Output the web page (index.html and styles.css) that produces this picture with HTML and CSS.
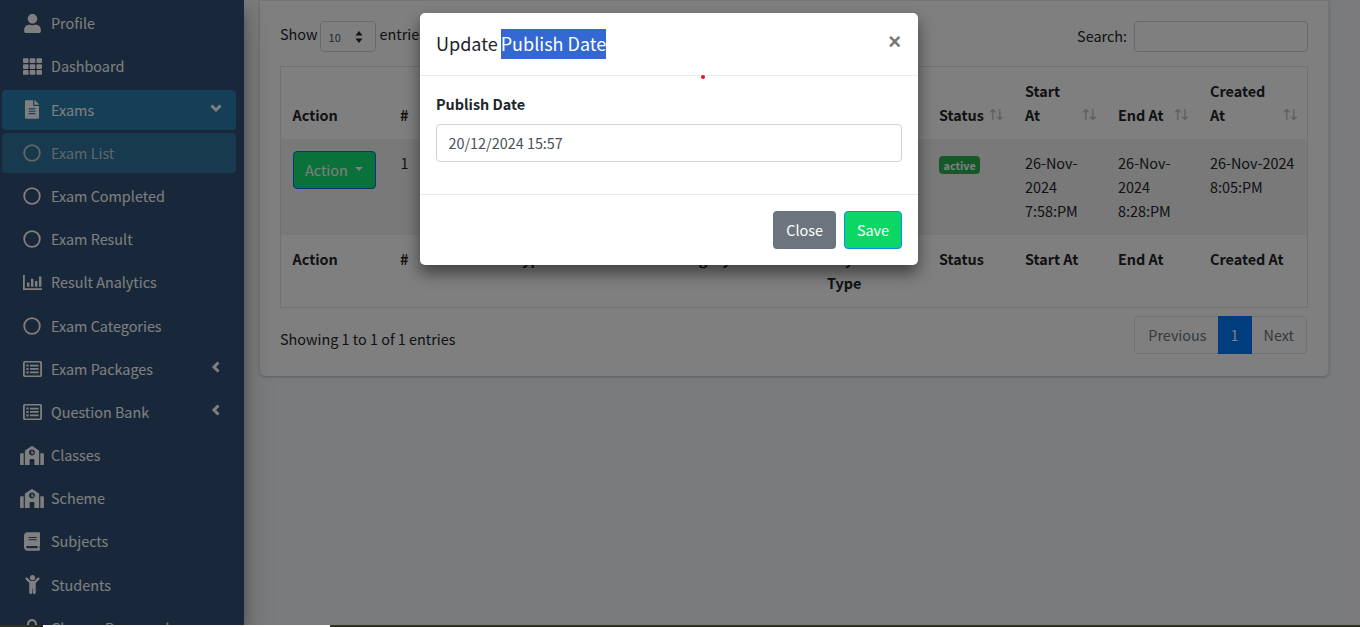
FILE: index.html
```html
<!DOCTYPE html>
<html lang="en">
<head>
<meta charset="utf-8">
<title>Exam List</title>
<link rel="stylesheet" href="styles.css">
</head>
<body>
<div class="shell">
  <aside class="sidebar">
    <nav class="nav">
      <a class="nav-link"><span class="nav-icon"><svg class="i-user" viewBox="0 0 448 512"><path d="M224 256c70.7 0 128-57.3 128-128S294.7 0 224 0 96 57.3 96 128s57.3 128 128 128zm89.6 32h-16.7c-22.2 10.2-46.9 16-72.9 16s-50.6-5.800-72.900-16h-16.700C60.200 288 0 348.200 0 422.400V464c0 26.500 21.500 48 48 48h352c26.500 0 48-21.500 48-48v-41.600c0-74.200-60.200-134.400-134.400-134.400z"/></svg></span><span>Profile</span></a>
      <a class="nav-link"><span class="nav-icon"><svg class="i-th" viewBox="0 0 512 512"><path d="M149.333 56v80c0 13.255-10.745 24-24 24H24c-13.255 0-24-10.745-24-24V56c0-13.255 10.745-24 24-24h101.333c13.255 0 24 10.745 24 24zm181.334 240v-80c0-13.255-10.745-24-24-24H205.333c-13.255 0-24 10.745-24 24v80c0 13.255 10.745 24 24 24h101.333c13.256 0 24.001-10.745 24.001-24zm32-240v80c0 13.255 10.745 24 24 24H488c13.255 0 24-10.745 24-24V56c0-13.255-10.745-24-24-24H386.667c-13.255 0-24 10.745-24 24zm-32 80V56c0-13.255-10.745-24-24-24H205.333c-13.255 0-24 10.745-24 24v80c0 13.255 10.745 24 24 24h101.333c13.256 0 24.001-10.745 24.001-24zm-205.334 56H24c-13.255 0-24 10.745-24 24v80c0 13.255 10.745 24 24 24h101.333c13.255 0 24-10.745 24-24v-80c0-13.255-10.745-24-24-24zM0 376v80c0 13.255 10.745 24 24 24h101.333c13.255 0 24-10.745 24-24v-80c0-13.255-10.745-24-24-24H24c-13.255 0-24 10.745-24 24zm386.667-56H488c13.255 0 24-10.745 24-24v-80c0-13.255-10.745-24-24-24H386.667c-13.255 0-24 10.745-24 24v80c0 13.255 10.745 24 24 24zm0 160H488c13.255 0 24-10.745 24-24v-80c0-13.255-10.745-24-24-24H386.667c-13.255 0-24 10.745-24 24v80c0 13.255 10.745 24 24 24zM181.333 376v80c0 13.255 10.745 24 24 24h101.333c13.255 0 24-10.745 24-24v-80c0-13.255-10.745-24-24-24H205.333c-13.255 0-24 10.745-24 24z"/></svg></span><span>Dashboard</span></a>
      <a class="nav-link is-open"><span class="nav-icon"><svg class="i-file" viewBox="0 0 384 512"><path d="M224 136V0H24C10.700 0 0 10.700 0 24v464c0 13.300 10.700 24 24 24h336c13.300 0 24-10.700 24-24V160H248c-13.200 0-24-10.800-24-24zm64 236c0 6.600-5.400 12-12 12H108c-6.600 0-12-5.400-12-12v-8c0-6.600 5.400-12 12-12h168c6.600 0 12 5.400 12 12v8zm0-64c0 6.600-5.400 12-12 12H108c-6.600 0-12-5.400-12-12v-8c0-6.600 5.400-12 12-12h168c6.600 0 12 5.400 12 12v8zm0-72v8c0 6.600-5.400 12-12 12H108c-6.600 0-12-5.400-12-12v-8c0-6.600 5.400-12 12-12h168c6.600 0 12 5.400 12 12zm96-114.100v6.100H256V0h6.100c6.400 0 12.500 2.500 17 7l97.900 98c4.500 4.500 7 10.600 7 16.900z"/></svg></span><span>Exams</span><svg class="caret" viewBox="0 0 12 12"><polyline points="1.500,3.500 6,8 10.500,3.500"/></svg></a>
      <a class="nav-link is-current"><span class="nav-icon"><svg class="i-circle" viewBox="0 0 18 18"><circle cx="9" cy="9" r="7.800"/></svg></span><span>Exam List</span></a>
      <a class="nav-link"><span class="nav-icon"><svg class="i-circle" viewBox="0 0 18 18"><circle cx="9" cy="9" r="7.800"/></svg></span><span>Exam Completed</span></a>
      <a class="nav-link"><span class="nav-icon"><svg class="i-circle" viewBox="0 0 18 18"><circle cx="9" cy="9" r="7.800"/></svg></span><span>Exam Result</span></a>
      <a class="nav-link"><span class="nav-icon"><svg class="i-chart" viewBox="0 0 19 15"><path d="M0 0h1.800v13.200H19V15H0zM4 7.500h2.400v4.200H4zM8 3.800h2.400v7.900H8zM12 6h2.400v5.700H12zM16 1.500h2.400v10.200H16z"/></svg></span><span>Result Analytics</span></a>
      <a class="nav-link"><span class="nav-icon"><svg class="i-circle" viewBox="0 0 18 18"><circle cx="9" cy="9" r="7.800"/></svg></span><span>Exam Categories</span></a>
      <a class="nav-link"><span class="nav-icon"><svg class="i-list" viewBox="0 0 19 16"><path fill-rule="evenodd" d="M1.800 0h15.400C18.200 0 19 .8 19 1.800v12.400c0 1-.8 1.800-1.800 1.800H1.800C.8 16 0 15.200 0 14.200V1.800C0 .8.800 0 1.800 0zM1.800 1.600v12.800h15.400V1.600zM3.400 3.500h2.200v2.100H3.400zM7 3.700h8.600v1.700H7zM3.400 6.900h2.200V9H3.400zM7 7.100h8.600v1.700H7zM3.400 10.300h2.200v2.100H3.400zM7 10.500h8.600v1.700H7z"/></svg></span><span>Exam Packages</span><svg class="caret" viewBox="0 0 12 12"><polyline points="8.500,1.500 4,6 8.500,10.500"/></svg></a>
      <a class="nav-link"><span class="nav-icon"><svg class="i-list" viewBox="0 0 19 16"><path fill-rule="evenodd" d="M1.800 0h15.400C18.200 0 19 .8 19 1.800v12.400c0 1-.8 1.800-1.800 1.800H1.800C.8 16 0 15.200 0 14.200V1.800C0 .8.800 0 1.800 0zM1.800 1.600v12.800h15.400V1.600zM3.400 3.500h2.200v2.100H3.400zM7 3.700h8.600v1.700H7zM3.400 6.900h2.200V9H3.400zM7 7.100h8.600v1.700H7zM3.400 10.300h2.200v2.100H3.400zM7 10.500h8.600v1.700H7z"/></svg></span><span>Question Bank</span><svg class="caret" viewBox="0 0 12 12"><polyline points="8.500,1.500 4,6 8.500,10.500"/></svg></a>
      <a class="nav-link"><span class="nav-icon"><svg class="i-school" viewBox="0 0 640 512"><path d="M0 224v272c0 8.840 7.160 16 16 16h80V192H32c-17.670 0-32 14.330-32 32zm360-48h-24v-40c0-4.420-3.580-8-8-8h-16c-4.420 0-8 3.580-8 8v64c0 4.420 3.580 8 8 8h48c4.420 0 8-3.580 8-8v-16c0-4.420-3.580-8-8-8zm137.750-63.960l-160-106.670a32.020 32.020 0 0 0-35.500 0l-160 106.670A32.002 32.002 0 0 0 128 138.660V512h128V368c0-8.840 7.160-16 16-16h96c8.840 0 16 7.160 16 16v144h128V138.670c0-10.700-5.350-20.690-14.250-26.630zM320 256c-44.180 0-80-35.820-80-80s35.820-80 80-80 80 35.820 80 80-35.820 80-80 80zm288-64h-64v320h80c8.840 0 16-7.160 16-16V224c0-17.670-14.330-32-32-32z"/></svg></span><span>Classes</span></a>
      <a class="nav-link"><span class="nav-icon"><svg class="i-school" viewBox="0 0 640 512"><path d="M0 224v272c0 8.840 7.160 16 16 16h80V192H32c-17.670 0-32 14.330-32 32zm360-48h-24v-40c0-4.420-3.580-8-8-8h-16c-4.420 0-8 3.580-8 8v64c0 4.420 3.580 8 8 8h48c4.420 0 8-3.580 8-8v-16c0-4.420-3.580-8-8-8zm137.750-63.960l-160-106.670a32.020 32.020 0 0 0-35.500 0l-160 106.670A32.002 32.002 0 0 0 128 138.660V512h128V368c0-8.840 7.160-16 16-16h96c8.840 0 16 7.160 16 16v144h128V138.670c0-10.700-5.350-20.690-14.250-26.630zM320 256c-44.180 0-80-35.820-80-80s35.820-80 80-80 80 35.820 80 80-35.820 80-80 80zm288-64h-64v320h80c8.840 0 16-7.160 16-16V224c0-17.670-14.330-32-32-32z"/></svg></span><span>Scheme</span></a>
      <a class="nav-link"><span class="nav-icon"><svg class="i-book" viewBox="0 0 448 512"><path d="M448 360V24c0-13.300-10.700-24-24-24H96C43 0 0 43 0 96v320c0 53 43 96 96 96h328c13.300 0 24-10.700 24-24v-16c0-7.500-3.500-14.300-8.900-18.700-4.200-15.400-4.200-59.300 0-74.700 5.400-4.300 8.900-11.100 8.900-18.600zM128 134c0-3.300 2.700-6 6-6h212c3.300 0 6 2.700 6 6v20c0 3.300-2.700 6-6 6H134c-3.300 0-6-2.700-6-6v-20zm0 64c0-3.300 2.700-6 6-6h212c3.300 0 6 2.700 6 6v20c0 3.300-2.700 6-6 6H134c-3.300 0-6-2.700-6-6v-20zm253.400 250H96c-17.700 0-32-14.300-32-32 0-17.600 14.400-32 32-32h285.400c-1.900 17.100-1.900 46.900 0 64z"/></svg></span><span>Subjects</span></a>
      <a class="nav-link"><span class="nav-icon"><svg class="i-child" viewBox="0 0 384 512"><path d="M120 72c0-39.765 32.235-72 72-72s72 32.235 72 72c0 39.764-32.235 72-72 72s-72-32.236-72-72zm254.627 1.373c-12.496-12.497-32.758-12.497-45.254 0L242.745 160H141.254L54.627 73.373c-12.496-12.497-32.758-12.497-45.254 0-12.497 12.497-12.497 32.758 0 45.255L104 213.254V480c0 17.673 14.327 32 32 32h16c17.673 0 32-14.327 32-32V368h16v112c0 17.673 14.327 32 32 32h16c17.673 0 32-14.327 32-32V213.254l94.627-94.627c12.497-12.497 12.497-32.757 0-45.254z"/></svg></span><span>Students</span></a>
      <a class="nav-link"><span class="nav-icon"><svg class="i-lock" viewBox="0 0 14 18"><path fill-rule="evenodd" d="M7 0a5 5 0 0 1 5 5v3h1a1 1 0 0 1 1 1v8a1 1 0 0 1-1 1H1a1 1 0 0 1-1-1V9a1 1 0 0 1 1-1h1V5a5 5 0 0 1 5-5zm0 2.200A2.800 2.800 0 0 0 4.200 5v3h5.600V5A2.800 2.800 0 0 0 7 2.200z"/></svg></span><span>Change Password</span></a>
    </nav>
  </aside>

  <main class="content">
    <section class="card">
      <div class="controls">
        <div class="length">
          <span class="length-show">Show</span>
          <div class="select"><span>10</span><svg viewBox="0 0 8 12"><path d="M4 0l3.500 4.500h-7zM4 12L.5 7.500h7z"/></svg></div>
          <span class="length-end">entries</span>
        </div>
        <label class="search"><span class="search-label">Search:</span><input class="search-input" type="text"></label>
      </div>

      <div class="table-wrap">
        <table class="table">
          <colgroup>
            <col class="c-action"><col class="c-num"><col class="c-type"><col class="c-cat"><col class="c-key"><col class="c-status"><col class="c-start"><col class="c-end"><col class="c-created">
          </colgroup>
          <thead>
            <tr>
              <th class="first-col">Action</th>
              <th>#</th>
              <th></th>
              <th></th>
              <th></th>
              <th class="sort">Status</th>
              <th class="sort">Start At</th>
              <th class="sort">End At</th>
              <th class="sort">Created At</th>
            </tr>
          </thead>
          <tbody>
            <tr class="striped">
              <td class="first-col"><button class="btn btn-action" type="button">Action<span class="btn-caret"></span></button></td>
              <td class="num">1</td>
              <td></td>
              <td></td>
              <td></td>
              <td><span class="badge">active</span></td>
              <td>26-Nov-2024 7:58:PM</td>
              <td>26-Nov-2024 8:28:PM</td>
              <td>26-Nov-2024 8:05:PM</td>
            </tr>
          </tbody>
          <tfoot>
            <tr>
              <th class="first-col">Action</th>
              <th>#</th>
              <th>Exam Type</th>
              <th>Category</th>
              <th>Key<br>Type</th>
              <th>Status</th>
              <th>Start At</th>
              <th>End At</th>
              <th>Created At</th>
            </tr>
          </tfoot>
        </table>
      </div>

      <div class="table-foot">
        <div class="info">Showing 1 to 1 of 1 entries</div>
        <ul class="pagination">
          <li class="page first">Previous</li>
          <li class="page current">1</li>
          <li class="page last">Next</li>
        </ul>
      </div>
    </section>
  </main>
  <div class="gutter"></div>

  <div class="backdrop"></div>

  <div class="modal">
    <header class="modal-header">
      <h5 class="modal-title">Update <span class="selected">Publish Date</span></h5>
      <span class="close">×</span>
    </header>
    <span class="red-dot"></span>
    <div class="modal-body">
      <label class="field-label" for="publish">Publish Date</label>
      <input class="field" id="publish" type="text" value="20/12/2024 15:57">
    </div>
    <footer class="modal-footer">
      <button class="btn btn-close" type="button">Close</button>
      <button class="btn btn-save" type="button">Save</button>
    </footer>
  </div>
</div>
<div class="strip"><span class="strip-white"></span></div>
</body>
</html>
```
FILE: styles.css
```css
* { box-sizing: border-box; }

html, body {
  margin: 0;
  height: 100%;
  overflow: hidden;
}

body {
  font-family: "Noto Sans CJK SC", "Noto Sans", sans-serif;
  font-size: 14.4px;
  line-height: 24px;
  color: #212529;
  background: #2e3022;
}

.shell {
  position: relative;
  display: flex;
  height: 625px;
  overflow: hidden;
  background: #f4f6f9;
}

/* sidebar */
.sidebar {
  flex: 0 0 244px;
  background: #305074;
  box-shadow: 0 14px 28px rgba(0, 0, 0, .25), 0 10px 10px rgba(0, 0, 0, .22);
  position: relative;
  z-index: 1;
}

.nav {
  display: flex;
  flex-direction: column;
  gap: 3.19px;
  padding: 3.2px 8px 0 2px;
}

.nav-link {
  display: flex;
  align-items: center;
  flex: 0 0 40px;
  padding: 0 16px 0 17px;
  border-radius: 4px;
  color: #fff;
}

.nav-icon {
  flex: 0 0 26px;
  height: 24px;
  margin-right: 6px;
  display: flex;
  align-items: center;
  justify-content: center;
}

.nav-icon svg { fill: #fff; display: block; }
.i-user { width: 17px; height: 19px; }
.i-th { width: 19px; height: 19px; }
.i-file { width: 14px; height: 19px; }
.i-circle { width: 18px; height: 18px; fill: none !important; stroke: #fff; stroke-width: 1.800; }
.i-chart { width: 19px; height: 15px; }
.i-list { width: 19px; height: 16px; }
.i-school { width: 24px; height: 19px; }
.i-book { width: 16px; height: 19px; }
.i-child { width: 15px; height: 19px; }
.i-lock { width: 14px; height: 18px; }

.caret {
  width: 12px;
  height: 12px;
  margin: -3px -2px 0 auto;
  fill: none;
  stroke: #fff;
  stroke-width: 3;
}

.is-open { background: #2a7fae; }
.is-current { background: #2e749f; color: #c4ccd4; }
.is-current .i-circle { stroke: #c4ccd4; }

/* content */
.content {
  flex: 0 0 1099px;
  padding: 0 15px 0 16px;
}

.gutter { flex: 1; background: #f6f7fa; }

.card {
  height: 376px;
  padding: 20px 20px 0;
  background: #fff;
  border: 1px solid #e6e8ea;
  border-width: 1px 1px 0 0;
  border-radius: 0 0 5px 5px;
  box-shadow: 0 1px 3px rgba(0, 0, 0, .25);
}

.controls {
  display: flex;
  justify-content: space-between;
  height: 31px;
  margin-bottom: 14px;
}

.length {
  display: flex;
  align-items: flex-start;
  gap: 4px;
}

.length-show { margin-right: -2px; line-height: 26px; }
.length-end { line-height: 26px; }

.search {
  display: flex;
  align-items: flex-start;
  gap: 7px;
}

.search-label { line-height: 30px; }

.select {
  display: flex;
  align-items: center;
  justify-content: space-between;
  width: 56px;
  height: 31px;
  padding: 0 12px 0 8px;
  border: 1px solid #ced4da;
  border-radius: 4px;
  font-size: 11px;
  color: #495057;
}

.select svg { width: 8px; height: 12px; fill: #212529; }

.search-input {
  width: 174px;
  height: 31px;
  border: 1px solid #ced4da;
  border-radius: 4px;
  background: #fff;
}

.table-wrap { border: 1px solid #dee2e6; width: 1028px; }

.table {
  width: 1026px;
  table-layout: fixed;
  border-collapse: collapse;
}

.c-action { width: 107px; }
.c-num { width: 72px; }
.c-type { width: 195px; }
.c-cat { width: 160px; }
.c-key { width: 112px; }
.c-status { width: 86px; }
.c-start { width: 93px; }
.c-end { width: 92px; }
.c-created { width: 109px; }

th, td {
  padding: 12px;
  text-align: left;
  vertical-align: top;
  font-weight: 400;
}

.first-col { padding-left: 11.500px; }

th { font-weight: 700; }
thead th { vertical-align: bottom; position: relative; }
thead .sort { padding-right: 30px; }

.num { padding-left: 12.500px; }

.sort::before, .sort::after {
  position: absolute;
  bottom: 12px;
  font-size: 15px;
  line-height: 24px;
  font-weight: 400;
  opacity: .3;
  font-family: "DejaVu Sans", sans-serif;
}
.sort::before { content: "\2191"; right: 14px; }
.sort::after { content: "\2193"; right: 7px; }

.striped { background: #f2f2f2; }

.btn {
  height: 38px;
  padding: 0 12px;
  border: 1px solid transparent;
  border-radius: 4px;
  font: inherit;
  color: #fff;
}

.btn-action {
  display: flex;
  align-items: center;
  width: 83px;
  margin-left: .5px;
  padding: 0 11px;
  background: #12e272;
  border-color: #0d6efd;
  color: #fff;
}

.btn-caret {
  width: 0;
  height: 0;
  margin-left: 7px;
  margin-top: -2px;
  border-top: 4px solid currentColor;
  border-left: 4px solid transparent;
  border-right: 4px solid transparent;
}

.badge {
  display: inline-block;
  margin-top: 5px;
  padding: 0 4.500px;
  height: 18px;
  border-radius: 4px;
  background: #2cb054;
  color: #fff;
  font-size: 10.800px;
  line-height: 18px;
  font-weight: 700;
  vertical-align: top;
}

.table-foot {
  display: flex;
  justify-content: space-between;
  align-items: flex-start;
  margin-top: 8px;
}

.info { padding-top: 11px; }

.pagination {
  display: flex;
  margin: 0 1px 0 0;
  padding: 0;
  list-style: none;
}

.page {
  height: 38px;
  padding: 6px 12px;
  border: 1px solid #dee2e6;
  margin-left: -1px;
  color: #6c757d;
  background: #fff;
}

.first { padding: 6px 11px 6px 13px; border-radius: 4px 0 0 4px; }
.last { border-radius: 0 4px 4px 0; }

.current {
  background: #007bff;
  border-color: #007bff;
  color: #fff;
  position: relative;
}

/* modal */
.backdrop {
  position: absolute;
  inset: 0;
  z-index: 5;
  background: rgba(0, 0, 0, .5);
}

.modal {
  position: absolute;
  z-index: 6;
  top: 13px;
  left: 420px;
  width: 498px;
  background: #fff;
  border-radius: 5px;
  box-shadow: 0 8px 16px rgba(0, 0, 0, .5);
}

.modal-header {
  display: flex;
  align-items: flex-start;
  justify-content: space-between;
  padding: 16px;
  height: 63px;
  border-bottom: 1px solid #e9ecef;
}

.modal-title {
  margin: 0;
  font-size: 18px;
  line-height: 28px;
  font-weight: 400;
}

.selected {
  display: inline-block;
  margin-left: -1px;
  padding-bottom: 2px;
  background: #3367d1;
  color: #fff;
}

.close {
  margin-right: 1px;
  font-family: "Liberation Sans", sans-serif;
  font-size: 22px;
  line-height: 26px;
  font-weight: 700;
  color: #777;
}

.red-dot {
  position: absolute;
  top: 62px;
  left: 281px;
  width: 4px;
  height: 4px;
  border-radius: 50%;
  background: #e8101c;
}

.modal-body {
  padding: 16px 16px 32px;
}

.field-label {
  display: block;
  margin-bottom: 8px;
  font-weight: 700;
}

.field {
  display: block;
  width: 100%;
  height: 38px;
  padding: 0 12px 2px 11.500px;
  border: 1px solid #ced4da;
  border-radius: 4px;
  font: inherit;
  color: #495057;
}

.modal-footer {
  display: flex;
  justify-content: flex-end;
  gap: 8px;
  padding: 16px;
  border-top: 1px solid #e9ecef;
}

.btn-close { background: #6c757d; }
.btn-save { background: #0bd764; border-color: #0d8cf0; }

.strip {
  height: 2px;
  padding-left: 43px;
}

.strip-white {
  display: block;
  width: 287px;
  height: 2px;
  background: #fff;
}
```
